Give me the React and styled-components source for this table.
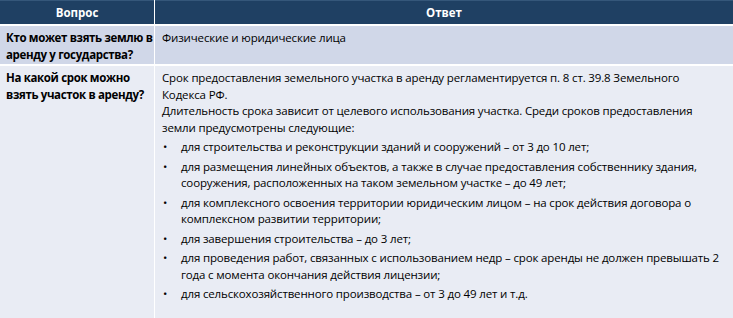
import styled, { createGlobalStyle } from "styled-components"

const GlobalStyle = createGlobalStyle`
  html, body {
    margin: 0;
    padding: 0;
    background: #ffffff;
  }
  body {
    font-family: "Open Sans", "Liberation Sans", sans-serif;
    color: #000;
  }
`

const Table = styled.div`
  display: grid;
  grid-template-columns: 154px 1fr;
  grid-template-rows: 24px 38px 252px;
  column-gap: 1px;
  row-gap: 2px;
  width: 733px;
  height: 318px;
  background: #ffffff;
  overflow: hidden;
`

const HeadCell = styled.div`
  background: #1f4063;
  border-top: 1px solid #35577a;
  color: #ffffff;
  font-weight: 700;
  font-size: 11.5px;
  display: flex;
  align-items: center;
  justify-content: center;
`

const Cell = styled.div`
  background: ${(p) => (p.$shade ? "#d0d7e8" : "#e9ecf4")};
  padding: ${(p) => (p.$q ? "4px 0 0 6px" : "4px 6px 0 7px")};
  font-size: 11.5px;
  line-height: 16.5px;
  letter-spacing: ${(p) => (p.$q ? "-0.35px" : "-0.15px")};
  font-weight: ${(p) => (p.$q ? 700 : 400)};
`

const Para = styled.p`
  margin: 0;
  padding-right: 16px;
`

const List = styled.ul`
  list-style: none;
  margin: 3px 0 0;
  padding: 0;
  display: flex;
  flex-direction: column;
  gap: 3px;
`

const Item = styled.li`
  display: flex;
  gap: 11px;
  &::before {
    content: "•";
    flex: 0 0 7px;
    padding-left: 1px;
  }
`

const terms = [
  "для строительства и реконструкции зданий и сооружений – от 3 до 10 лет;",
  "для размещения линейных объектов, а также в случае предоставления собственнику здания, сооружения, расположенных на таком земельном участке – до 49 лет;",
  "для комплексного освоения территории юридическим лицом – на срок действия договора о комплексном развитии территории;",
  "для завершения строительства – до 3 лет;",
  "для проведения работ, связанных с использованием недр – срок аренды не должен превышать 2 года с момента окончания действия лицензии;",
  "для сельскохозяйственного производства – от 3 до 49 лет и т.д.",
]

export default function App() {
  return (
    <>
      <GlobalStyle />
      <Table>
        <HeadCell>Вопрос</HeadCell>
        <HeadCell>Ответ</HeadCell>

        <Cell $shade $q>Кто может взять землю в аренду у государства?</Cell>
        <Cell $shade>Физические и юридические лица</Cell>

        <Cell $q>На какой срок можно взять участок в аренду?</Cell>
        <Cell>
          <Para>
            Срок предоставления земельного участка в аренду регламентируется п. 8 ст. 39.8 Земельного Кодекса РФ.
          </Para>
          <Para>
            Длительность срока зависит от целевого использования участка. Среди сроков предоставления земли предусмотрены следующие:
          </Para>
          <List>
            {terms.map((t) => (
              <Item key={t}>{t}</Item>
            ))}
          </List>
        </Cell>
      </Table>
    </>
  )
}
